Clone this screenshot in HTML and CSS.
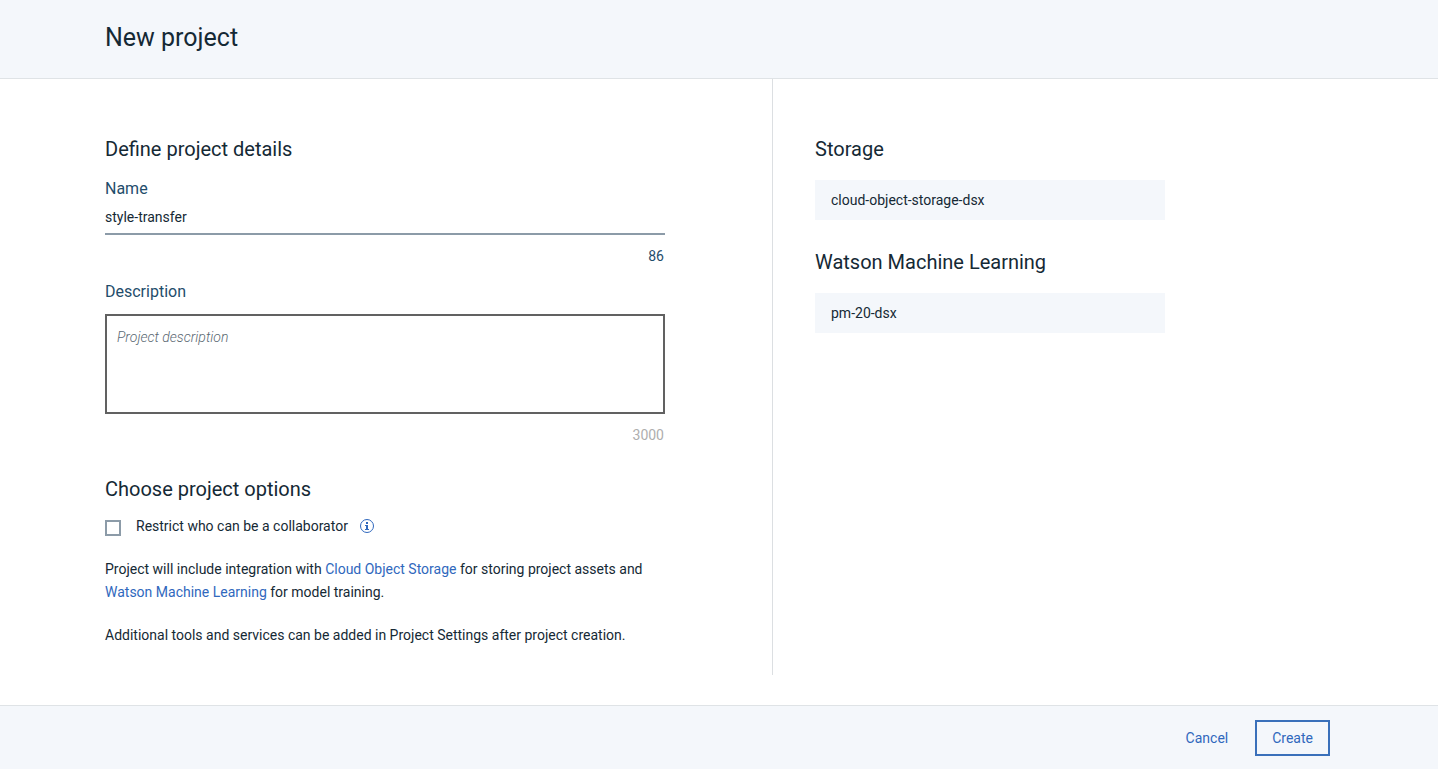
FILE: index.html
```html
<!DOCTYPE html>
<html lang="en">
<head>
<meta charset="utf-8">
<meta name="viewport" content="width=device-width, initial-scale=1">
<title>New project</title>
<link rel="stylesheet" href="styles.css">
</head>
<body>
<form class="page">
  <header class="header">
    <h1 class="title">New project</h1>
  </header>

  <main class="content">
    <section class="details">
      <h2 class="heading">Define project details</h2>
      <div class="field">
        <label class="label" for="name">Name</label>
        <input class="text-input" id="name" type="text" value="style-transfer">
        <span class="counter">86</span>
      </div>
      <div class="field">
        <label class="label" for="description">Description</label>
        <textarea class="text-area" id="description" placeholder="Project description"></textarea>
        <span class="counter counter-muted">3000</span>
      </div>

      <h2 class="heading heading-options">Choose project options</h2>
      <div class="option">
        <input class="checkbox" id="restrict" type="checkbox">
        <label for="restrict">Restrict who can be a collaborator</label>
        <button class="info" type="button" aria-label="More information">
          <svg class="info-icon" viewBox="0 0 14 14" aria-hidden="true">
            <circle cx="7" cy="7" r="6.5" fill="none" stroke="currentColor"/>
            <path d="M6 3h2v2H6zM5 6h3v4h1v1H5v-1h1V7H5z" fill="currentColor"/>
          </svg>
        </button>
      </div>
      <p class="note">Project will include integration with <a class="link" href="#storage">Cloud Object Storage</a> for storing project assets and <a class="link" href="#learning">Watson Machine Learning</a> for model training.</p>
      <p class="note">Additional tools and services can be added in Project Settings after project creation.</p>
    </section>

    <aside class="services">
      <section class="service" id="storage">
        <h2 class="heading">Storage</h2>
        <p class="instance">cloud-object-storage-dsx</p>
      </section>
      <section class="service" id="learning">
        <h2 class="heading">Watson Machine Learning</h2>
        <p class="instance">pm-20-dsx</p>
      </section>
    </aside>
  </main>

  <footer class="footer">
    <button class="button" type="button">Cancel</button>
    <button class="button button-outlined" type="submit">Create</button>
  </footer>
</form>
</body>
</html>
```

FILE: styles.css
```css
* {
  box-sizing: border-box;
}

body,
h1,
h2,
p {
  margin: 0;
}

body {
  color: #152935;
  background: #fff;
  font-family: Roboto, "Liberation Sans", sans-serif;
  font-size: 14px;
  line-height: 20px;
}

input,
textarea,
button {
  margin: 0;
  color: inherit;
  font: inherit;
}

.page {
  display: flex;
  flex-direction: column;
  min-height: 100vh;
}

.header {
  padding: 20px 105px 22px;
  background: #f4f7fb;
  border-bottom: 1px solid #dfe3e6;
}

.title {
  font-size: 25px;
  font-weight: 400;
  line-height: 36px;
}

.content {
  display: flex;
  flex: 1;
  padding-bottom: 30px;
}

.details {
  flex: 0 0 calc(50% + 54px);
  padding: 56px 107px 28px 105px;
  border-right: 1px solid #dcdfe2;
}

.heading {
  font-size: 20px;
  font-weight: 400;
  line-height: 28px;
}

.field {
  display: flex;
  flex-direction: column;
  margin-top: 14px;
}

.label {
  color: #1f4d6b;
  font-size: 16px;
  line-height: 24px;
}

.text-input {
  height: 34px;
  padding: 0;
  border: 0;
  border-bottom: 2px solid #8c9ba8;
  border-radius: 0;
  background: transparent;
  outline: none;
}

.text-area {
  height: 100px;
  margin-top: 10px;
  padding: 11px 10px;
  border: 2px solid #616161;
  border-radius: 0;
  background: transparent;
  outline: none;
  resize: none;
}

.text-area::placeholder {
  color: #5a6872;
  font-style: italic;
  font-weight: 300;
  opacity: 1;
}

.counter {
  margin-top: 11px;
  padding-right: 1px;
  color: #1f4d6b;
  text-align: right;
}

.counter-muted {
  color: #aeaeae;
}

.heading-options {
  margin-top: 30px;
}

.option {
  display: flex;
  align-items: center;
  margin: 13px 0 22px;
}

.checkbox {
  align-self: flex-end;
  width: 16px;
  height: 16px;
  margin-right: 15px;
  border: 2px solid #8c9ba8;
  appearance: none;
}

.checkbox:checked {
  background: #3d70b2;
}

.info {
  display: flex;
  margin-left: 12px;
  padding: 0;
  border: 0;
  background: none;
  color: #3068bd;
}

.info-icon {
  width: 14px;
  height: 14px;
}

.note {
  margin-bottom: 20px;
  line-height: 23px;
}

.note:last-child {
  margin-bottom: 0;
}

.link {
  color: #3068bd;
  text-decoration: none;
}

.services {
  flex: 1;
  padding: 56px 42px 0;
}

.service {
  max-width: 350px;
  margin-bottom: 28px;
}

.instance {
  margin-top: 17px;
  padding: 10px 16px;
  background: #f4f7fb;
}

.footer {
  display: flex;
  justify-content: flex-end;
  gap: 10px;
  padding: 14px 108px 13px;
  background: #f4f7fb;
  border-top: 1px solid #dfe3e6;
}

.button {
  padding: 6px 15px;
  border: 2px solid transparent;
  background: transparent;
  color: #3068bd;
  line-height: 20px;
}

.button-outlined {
  border-color: #3a70ba;
}
```
